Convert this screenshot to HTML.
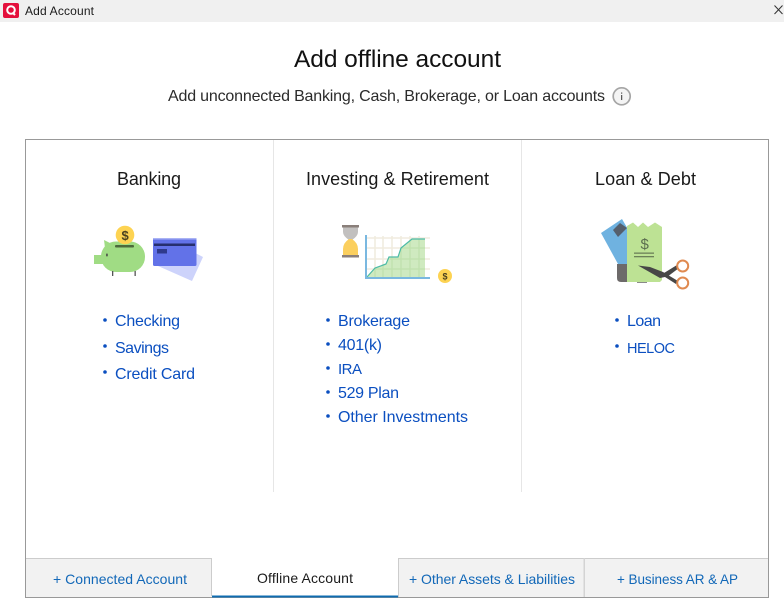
<!DOCTYPE html>
<html><head><meta charset="utf-8"><style>
html,body{margin:0;padding:0;width:784px;height:601px;overflow:hidden;background:#fff}
svg{display:block}
text{font-family:"Liberation Sans",sans-serif}
.l{fill:#0b4fc0;font-size:16px}
.t{fill:#1268b8;font-size:14px}
.h{fill:#1a1a1a;font-size:18px}
</style></head><body>
<svg width="784" height="601" viewBox="0 0 784 601" xmlns="http://www.w3.org/2000/svg">
<rect width="784" height="601" fill="#fff"/>
<rect width="784" height="22" fill="#f0f0f0"/>
<rect x="3" y="3" width="16" height="15" rx="2" fill="#e4103c"/>
<circle cx="11" cy="10" r="3.800" fill="none" stroke="#fff" stroke-width="2"/>
<path d="M12.500 12.500L15 15" stroke="#fff" stroke-width="2"/>
<text x="25" y="15" font-size="12" fill="#1a1a1a" textLength="69">Add Account</text>
<path d="M774.500 5.500L782.500 14M782.500 5.500L774.500 14" stroke="#333" stroke-width="1"/>

<text x="294" y="67" font-size="24.500" fill="#111" textLength="207">Add offline account</text>
<text x="168" y="101" font-size="16" fill="#2b2b2b" textLength="437">Add unconnected Banking, Cash, Brokerage, or Loan accounts</text>
<circle cx="621.700" cy="96.300" r="8.500" fill="#f4f4f4" stroke="#a5a5a5" stroke-width="1.700"/>
<rect x="621.200" y="92.500" width="1" height="1.200" fill="#333"/><rect x="621.200" y="95" width="1" height="5" fill="#333"/>

<rect x="25.500" y="139.500" width="743" height="458" fill="#fff" stroke="#999"/>
<rect x="273" y="140" width="1" height="352" fill="#e6e6e6"/>
<rect x="521" y="140" width="1" height="352" fill="#e6e6e6"/>

<text class="h" x="117" y="185" textLength="64">Banking</text>
<text class="h" x="306" y="185" textLength="183">Investing &amp; Retirement</text>
<text class="h" x="595" y="185" textLength="101">Loan &amp; Debt</text>

<!-- piggy + card -->
<polygon points="170,240 203,257 192,281 158,266" fill="#cdd3fb"/>
<rect x="153" y="238" width="43.500" height="28" rx="1.500" fill="#6272e8"/>
<rect x="153" y="238" width="43.500" height="1.500" fill="#aab3f4"/>
<rect x="154" y="243.500" width="41" height="2.500" fill="#262f6e"/>
<rect x="157" y="249" width="10" height="4.500" fill="#2f3a8c"/>
<rect x="94" y="255" width="10" height="9" fill="#a0dc84"/>
<polygon points="104,240 111,243.500 105,248" fill="#a0dc84"/>
<rect x="101" y="241.500" width="44" height="30.500" rx="15" fill="#a0dc84"/>
<rect x="112" y="271" width="1.300" height="5" fill="#555"/><rect x="134.500" y="271" width="1.300" height="5" fill="#555"/>
<rect x="106.200" y="253.500" width="1.500" height="3" rx=".7" fill="#444"/>
<circle cx="125" cy="235" r="9.300" fill="#fdd352"/>
<text x="121.500" y="240" font-size="13" font-weight="bold" fill="#4a4120">$</text>
<rect x="115" y="245" width="19" height="2.500" rx="1" fill="#4c6a3c"/>

<!-- hourglass + chart -->
<path d="M343 227H358V232Q358 236 352 240H349Q343 236 343 232Z" fill="#c2c0bf"/>
<path d="M349 239H352Q358 243 358 249V256H343V249Q343 243 349 239Z" fill="#fbcf5e"/>
<rect x="342" y="225" width="17" height="2.500" fill="#8a7f7a"/>
<rect x="342" y="255" width="17" height="2.500" fill="#8a7f7a"/>
<g stroke="#f0ecdf" stroke-width="1.600">
<path d="M367 238H430M367 248H430M367 259H430M367 269H430M375 236V277M383 236V277M392 236V277M401 236V277M410 236V277M419 236V277"/>
</g>
<polygon points="367,277 375,268 386,264 389,257 398,257 401,248 412,239 425,239 425,277" fill="#cfeac0"/>
<g stroke="#bfe0ad" stroke-width="1.200">
<path d="M375 268V277M383 265V277M392 257V277M401 248V277M410 241V277M419 239V277M375 269H425M390 259H425M401 248H425"/>
</g>
<polyline points="367,277 375,268 386,264 389,257 398,257 401,248 412,239 425,239" fill="none" stroke="#4dbba5" stroke-width="1.200"/>
<rect x="365" y="235" width="2" height="44" fill="#7ab8e0"/>
<rect x="365" y="277" width="65" height="2" fill="#7ab8e0"/>
<circle cx="445" cy="276" r="7" fill="#fdd352"/>
<text x="442.500" y="279.500" font-size="9" font-weight="bold" fill="#4a4120">$</text>

<!-- loan -->
<polygon points="601,233 622,219 640,250 630,270 618,264" fill="#6fb2e0"/>
<polygon points="620,223 627,228 618,237 613,230" fill="#555f6c"/>
<path d="M617 264H627V282H621Q617 282 617 278Z" fill="#6d6a6a"/>
<rect x="637" y="282" width="10" height="1" fill="#8a8a8a"/>
<polygon points="627,226 633,222.500 638,227 643,222.500 648,227 655,222.500 662,227 662,280 660,282 627,282" fill="#bde294"/>
<text x="640.500" y="249" font-size="15" fill="#5c6e50">$</text>
<rect x="634" y="252.500" width="20" height="1.300" fill="#6c8058"/><rect x="634" y="256" width="20" height="1.300" fill="#6c8058"/>
<polygon points="638,265.500 650,267 663,272 678,281 676,284 665,277 660,278" fill="#474747"/>
<polygon points="664,273 677,265 679,268 667,277" fill="#474747"/>
<circle cx="682.700" cy="266" r="5.500" fill="#fff" stroke="#e08a50" stroke-width="2"/>
<circle cx="682.700" cy="283" r="5.500" fill="#fff" stroke="#e08a50" stroke-width="2"/>

<!-- lists -->
<g fill="#0b4fc0">
<circle cx="105" cy="320" r="1.800"/><circle cx="105" cy="346" r="1.800"/><circle cx="105" cy="372" r="1.800"/>
<circle cx="328" cy="320" r="1.800"/><circle cx="328" cy="344" r="1.800"/><circle cx="328" cy="368" r="1.800"/><circle cx="328" cy="392" r="1.800"/><circle cx="328" cy="416" r="1.800"/>
<circle cx="617" cy="320" r="1.800"/><circle cx="617" cy="346" r="1.800"/>
</g>
<text class="l" x="115" y="326" textLength="65">Checking</text>
<text class="l" x="115" y="353" textLength="54">Savings</text>
<text class="l" x="115" y="379" textLength="80">Credit Card</text>
<text class="l" x="338" y="326" textLength="72">Brokerage</text>
<text class="l" x="338" y="350" textLength="44">401(k)</text>
<text class="l" x="338" y="374" style="font-size:15px" textLength="24">IRA</text>
<text class="l" x="338" y="398" textLength="61">529 Plan</text>
<text class="l" x="338" y="422" textLength="130">Other Investments</text>
<text class="l" x="627" y="326" textLength="34">Loan</text>
<text class="l" x="627" y="353" style="font-size:14.500px" textLength="48">HELOC</text>

<!-- tabs -->
<rect x="26" y="558" width="186" height="39" fill="#f2f2f2"/>
<rect x="398" y="558" width="370" height="39" fill="#f2f2f2"/>
<rect x="26" y="558" width="186" height="1" fill="#ccc"/>
<rect x="398" y="558" width="370" height="1" fill="#ccc"/>
<rect x="211" y="558" width="1" height="38" fill="#ccc"/>
<rect x="398" y="558" width="1" height="39" fill="#ccc"/>
<rect x="583.500" y="558" width="1.500" height="39" fill="#d4d4d4"/>
<rect x="212" y="595.500" width="186" height="2" fill="#0f6cb0"/>
<text class="t" x="53" y="584" textLength="134">+ Connected Account</text>
<text x="257" y="583" font-size="14" fill="#1a1a1a" textLength="96">Offline Account</text>
<text class="t" x="409" y="584" textLength="166">+ Other Assets &amp; Liabilities</text>
<text class="t" x="617" y="584" style="font-size:13.500px" textLength="121">+ Business AR &amp; AP</text>
</svg>
</body></html>
